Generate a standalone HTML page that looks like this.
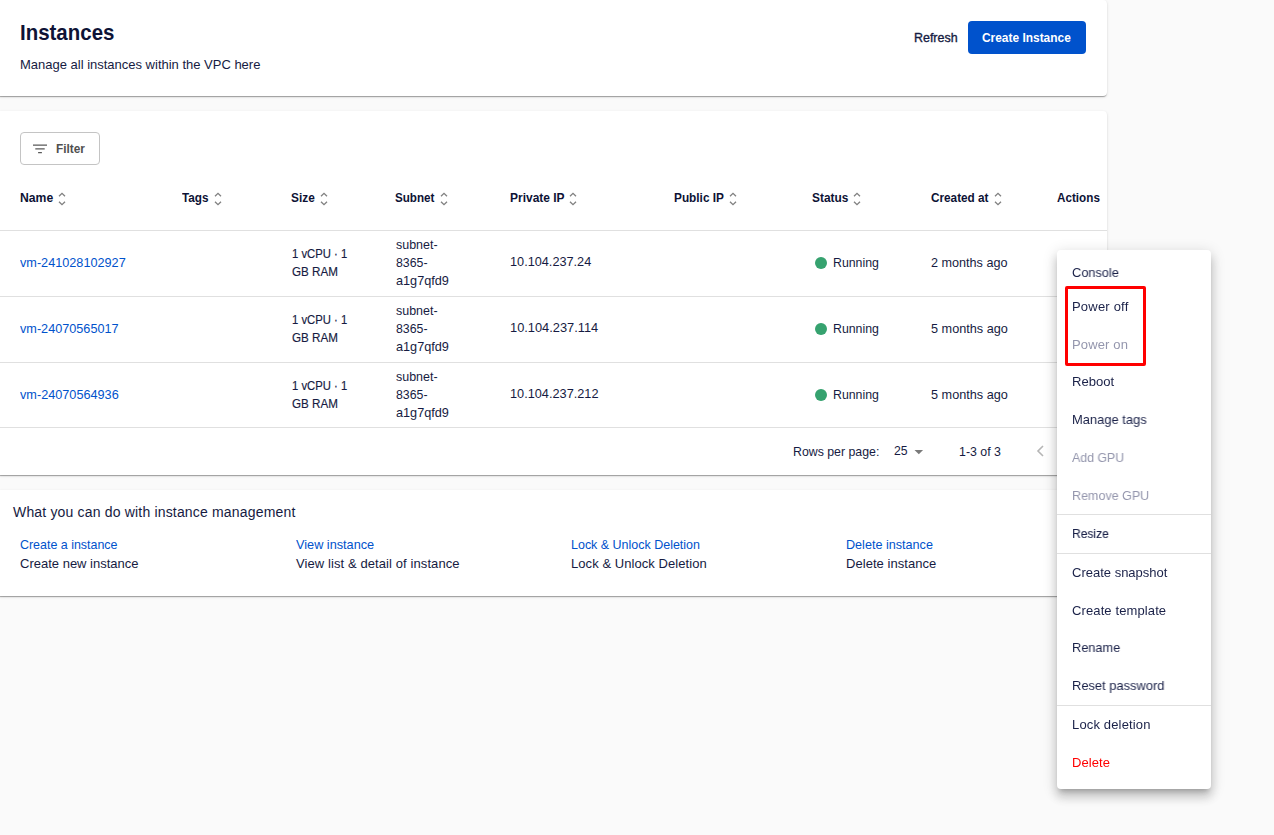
<!DOCTYPE html>
<html><head><meta charset="utf-8"><title>Instances</title>
<style>
*{box-sizing:border-box;margin:0;padding:0}
html,body{width:1274px;height:835px;overflow:hidden}
body{background:#fafafa;font-family:"Liberation Sans",sans-serif;color:#172b4d;position:relative;font-size:13px}
.card{position:absolute;left:-3px;width:1110px;background:#fff;border-radius:4px;box-shadow:0 2px 1px -1px rgba(0,0,0,.2),0 1px 1px 0 rgba(0,0,0,.14),0 1px 3px 0 rgba(0,0,0,.12)}
#hdr{top:0;height:96px}
#tbl{top:111px;height:364px}
#info{top:490px;height:106px}
.t{display:block;position:absolute;white-space:nowrap;color:#161b42;transform-origin:0 50%}
.t13{font-size:13px;line-height:15px}
.t14{font-size:14px;line-height:16px}
.title{font-size:22.5px;font-weight:700;color:#0e1336;line-height:24px}
.b{font-weight:700}
.w{color:#fff}
.gr{color:#505050}
.hd{color:#0d1235}
.med{-webkit-text-stroke:.35px #161b42}
.lnk{color:#0052cc;text-decoration:none}
.mi{will-change:transform;color:#1a2148}
.mi.dis{color:#9496ad}
.mi.red{color:#ff0000}
.btn{position:absolute;left:968px;top:21px;width:118px;height:33px;background:#0052cc;border-radius:4px}
.fbtn{position:absolute;left:20px;top:132px;width:80px;height:33px;border:1px solid #c4c4c4;border-radius:4px;background:#fff}
.fico{position:absolute;left:33px;top:144.3px}
.srt{position:absolute;top:192px}
.hr{position:absolute;left:0;width:1107px;height:1px;background:#e0e0e0}
.dot{position:absolute;left:814.8px;width:11.8px;height:11.8px;border-radius:50%;background:#36a26f}
.menu{position:absolute;left:1057px;top:250px;width:154px;height:539px;background:#fff;border-radius:4px;box-shadow:0 5px 5px -3px rgba(0,0,0,.2),0 8px 10px 1px rgba(0,0,0,.14),0 3px 14px 2px rgba(0,0,0,.12)}
.md{position:absolute;left:1057px;width:154px;height:1px;background:#e0e0e0}
.redbox{position:absolute;left:1065px;top:286px;width:81px;height:80px;border:3px solid #f00;border-radius:2px}
</style></head><body>
<div class="card" id="hdr"></div>
<div class="card" id="tbl"></div>
<div class="card" id="info"></div>
<div class="btn"></div>
<div class="fbtn"></div>
<svg class="fico" width="14" height="10" viewBox="0 0 14 10"><path d="M0 1h14M2.3 4.9h9.4M5.1 8.7h3.8" stroke="#5a5a5a" stroke-width="1.25" fill="none"/></svg>
<div class="hr" style="top:230px"></div>
<div class="hr" style="top:296px"></div>
<div class="hr" style="top:362px"></div>
<div class="hr" style="top:427px"></div>
<div class="dot" style="top:257px"></div>
<div class="dot" style="top:322.8px"></div>
<div class="dot" style="top:389px"></div>
<svg style="position:absolute;left:914px;top:450px" width="10" height="5" viewBox="0 0 10 5"><path d="M0.5 0h8.6l-4.3 4.3z" fill="#7a7a7a"/></svg>
<svg style="position:absolute;left:1036.4px;top:445px" width="8" height="12" viewBox="0 0 8 12"><path d="M7 1L2 6l5 5" stroke="#b5b5b5" stroke-width="1.6" fill="none"/></svg>
<div class="menu"></div>
<div class="md" style="top:514px"></div>
<div class="md" style="top:553px"></div>
<div class="md" style="top:705px"></div>
<div class="redbox"></div>

<h1 id="title" class="t title" style="left:20px;top:21px;transform:scaleX(0.9093)">Instances</h1>
<div id="sub" class="t t13" style="left:20px;top:57px;letter-spacing:-0.006px">Manage all instances within the VPC here</div>
<span id="refresh" class="t t13 med" style="left:914px;top:30px;transform:scaleX(0.9569)">Refresh</span>
<span id="create" class="t t13 b w" style="left:982px;top:30px;transform:scaleX(0.9168)">Create Instance</span>
<span id="filter" class="t t13 b gr" style="left:56px;top:140.8px;transform:scaleX(0.9112)">Filter</span>
<span id="hName" class="t t13 b hd" style="left:20px;top:190px;transform:scaleX(0.9377)">Name</span>
<svg class="srt" style="left:58.3px" width="8" height="14" viewBox="0 0 8 14"><path d="M1 4.3L4 1.3L7 4.3M1 9.7L4 12.7L7 9.7" stroke="#808080" stroke-width="1.3" fill="none"/></svg>
<span id="hTags" class="t t13 b hd" style="left:182px;top:190px;transform:scaleX(0.9020)">Tags</span>
<svg class="srt" style="left:213.5px" width="8" height="14" viewBox="0 0 8 14"><path d="M1 4.3L4 1.3L7 4.3M1 9.7L4 12.7L7 9.7" stroke="#808080" stroke-width="1.3" fill="none"/></svg>
<span id="hSize" class="t t13 b hd" style="left:291px;top:190px;transform:scaleX(0.9125)">Size</span>
<svg class="srt" style="left:319.7px" width="8" height="14" viewBox="0 0 8 14"><path d="M1 4.3L4 1.3L7 4.3M1 9.7L4 12.7L7 9.7" stroke="#808080" stroke-width="1.3" fill="none"/></svg>
<span id="hSubnet" class="t t13 b hd" style="left:395px;top:190px;transform:scaleX(0.8951)">Subnet</span>
<svg class="srt" style="left:440.0px" width="8" height="14" viewBox="0 0 8 14"><path d="M1 4.3L4 1.3L7 4.3M1 9.7L4 12.7L7 9.7" stroke="#808080" stroke-width="1.3" fill="none"/></svg>
<span id="hPriv" class="t t13 b hd" style="left:510px;top:190px;transform:scaleX(0.9208)">Private IP</span>
<svg class="srt" style="left:569.2px" width="8" height="14" viewBox="0 0 8 14"><path d="M1 4.3L4 1.3L7 4.3M1 9.7L4 12.7L7 9.7" stroke="#808080" stroke-width="1.3" fill="none"/></svg>
<span id="hPub" class="t t13 b hd" style="left:674px;top:190px;transform:scaleX(0.9087)">Public IP</span>
<svg class="srt" style="left:729.3px" width="8" height="14" viewBox="0 0 8 14"><path d="M1 4.3L4 1.3L7 4.3M1 9.7L4 12.7L7 9.7" stroke="#808080" stroke-width="1.3" fill="none"/></svg>
<span id="hStatus" class="t t13 b hd" style="left:812px;top:190px;transform:scaleX(0.9145)">Status</span>
<svg class="srt" style="left:853.1px" width="8" height="14" viewBox="0 0 8 14"><path d="M1 4.3L4 1.3L7 4.3M1 9.7L4 12.7L7 9.7" stroke="#808080" stroke-width="1.3" fill="none"/></svg>
<span id="hCreated" class="t t13 b hd" style="left:931px;top:190px;transform:scaleX(0.9042)">Created at</span>
<svg class="srt" style="left:994.2px" width="8" height="14" viewBox="0 0 8 14"><path d="M1 4.3L4 1.3L7 4.3M1 9.7L4 12.7L7 9.7" stroke="#808080" stroke-width="1.3" fill="none"/></svg>
<span id="hActions" class="t t13 b hd" style="left:1057px;top:190px;transform:scaleX(0.8995)">Actions</span>
<a id="nm0" class="t t13 lnk" style="left:20px;top:255px;transform:scaleX(0.9747)">vm-241028102927</a>
<div id="sa0" class="t t13" style="left:292px;top:246.4px;transform:scaleX(0.8685);-webkit-text-stroke:0.18px">1 vCPU · 1</div>
<div id="sb0" class="t t13" style="left:292px;top:264.4px;transform:scaleX(0.8957);-webkit-text-stroke:0.15px">GB RAM</div>
<div id="na0" class="t t13" style="left:396px;top:237px;transform:scaleX(0.9584)">subnet-</div>
<div id="nb0" class="t t13" style="left:396px;top:255.1px;transform:scaleX(0.9471)">8365-</div>
<div id="nc0" class="t t13" style="left:396px;top:273.2px;transform:scaleX(0.9762)">a1g7qfd9</div>
<div id="ip0" class="t t13" style="left:510px;top:254px;transform:scaleX(0.9771)">10.104.237.24</div>
<div id="run0" class="t t13" style="left:833px;top:254.6px;transform:scaleX(0.9484)">Running</div>
<div id="ago0" class="t t13" style="left:931px;top:254.7px;transform:scaleX(0.9704)">2 months ago</div>
<a id="nm1" class="t t13 lnk" style="left:20px;top:321px;transform:scaleX(0.9741)">vm-24070565017</a>
<div id="sa1" class="t t13" style="left:292px;top:312.4px;transform:scaleX(0.8685);-webkit-text-stroke:0.18px">1 vCPU · 1</div>
<div id="sb1" class="t t13" style="left:292px;top:330.4px;transform:scaleX(0.8957);-webkit-text-stroke:0.15px">GB RAM</div>
<div id="na1" class="t t13" style="left:396px;top:303px;transform:scaleX(0.9584)">subnet-</div>
<div id="nb1" class="t t13" style="left:396px;top:321.1px;transform:scaleX(0.9471)">8365-</div>
<div id="nc1" class="t t13" style="left:396px;top:339.2px;transform:scaleX(0.9762)">a1g7qfd9</div>
<div id="ip1" class="t t13" style="left:510px;top:320px;transform:scaleX(0.9870)">10.104.237.114</div>
<div id="run1" class="t t13" style="left:833px;top:320.6px;transform:scaleX(0.9484)">Running</div>
<div id="ago1" class="t t13" style="left:931px;top:320.7px;transform:scaleX(0.9751)">5 months ago</div>
<a id="nm2" class="t t13 lnk" style="left:20px;top:387px;transform:scaleX(0.9754)">vm-24070564936</a>
<div id="sa2" class="t t13" style="left:292px;top:378.4px;transform:scaleX(0.8685);-webkit-text-stroke:0.18px">1 vCPU · 1</div>
<div id="sb2" class="t t13" style="left:292px;top:396.4px;transform:scaleX(0.8957);-webkit-text-stroke:0.15px">GB RAM</div>
<div id="na2" class="t t13" style="left:396px;top:369px;transform:scaleX(0.9584)">subnet-</div>
<div id="nb2" class="t t13" style="left:396px;top:387.1px;transform:scaleX(0.9471)">8365-</div>
<div id="nc2" class="t t13" style="left:396px;top:405.2px;transform:scaleX(0.9762)">a1g7qfd9</div>
<div id="ip2" class="t t13" style="left:510px;top:386px;transform:scaleX(0.9792)">10.104.237.212</div>
<div id="run2" class="t t13" style="left:833px;top:386.6px;transform:scaleX(0.9484)">Running</div>
<div id="ago2" class="t t13" style="left:931px;top:386.7px;transform:scaleX(0.9751)">5 months ago</div>
<div id="rpp" class="t t13" style="left:793px;top:444px;transform:scaleX(0.9482)">Rows per page:</div>
<div id="n25" class="t t13" style="left:894px;top:443px;transform:scaleX(0.9409)">25</div>
<div id="rng" class="t t13" style="left:959px;top:444px;transform:scaleX(0.9516)">1-3 of 3</div>
<div id="ititle" class="t t14" style="left:13px;top:503.7px;letter-spacing:0.175px">What you can do with instance management</div>
<a id="l0" class="t t13 lnk" style="left:20px;top:536.8px;transform:scaleX(0.9567)">Create a instance</a>
<div id="d0" class="t t13" style="left:20px;top:555.5px;letter-spacing:0.002px">Create new instance</div>
<a id="l1" class="t t13 lnk" style="left:296px;top:536.8px;transform:scaleX(0.9772)">View instance</a>
<div id="d1" class="t t13" style="left:296px;top:555.5px;letter-spacing:0.092px">View list &amp; detail of instance</div>
<a id="l2" class="t t13 lnk" style="left:571px;top:536.8px;transform:scaleX(0.9597)">Lock &amp; Unlock Deletion</a>
<div id="d2" class="t t13" style="left:571px;top:555.5px;letter-spacing:0.063px">Lock &amp; Unlock Deletion</div>
<a id="l3" class="t t13 lnk" style="left:846px;top:536.8px;transform:scaleX(0.9699)">Delete instance</a>
<div id="d3" class="t t13" style="left:846px;top:555.5px;letter-spacing:0.042px">Delete instance</div>
<div id="m0" class="t t13 mi" style="left:1072px;top:264.7px;transform:scaleX(0.9831)">Console</div>
<div id="m1" class="t t13 mi" style="left:1072px;top:298.7px;letter-spacing:0.203px">Power off</div>
<div id="m2" class="t t13 mi dis" style="left:1072px;top:336.7px;letter-spacing:0.142px">Power on</div>
<div id="m3" class="t t13 mi" style="left:1072px;top:373.7px;transform:scaleX(1.0060)">Reboot</div>
<div id="m4" class="t t13 mi" style="left:1072px;top:411.7px;transform:scaleX(0.9929)">Manage tags</div>
<div id="m5" class="t t13 mi dis" style="left:1072px;top:449.7px;transform:scaleX(0.9496)">Add GPU</div>
<div id="m6" class="t t13 mi dis" style="left:1072px;top:487.7px;transform:scaleX(0.9627)">Remove GPU</div>
<div id="m7" class="t t13 mi" style="left:1072px;top:525.7px;transform:scaleX(0.9273);-webkit-text-stroke:0.10px">Resize</div>
<div id="m8" class="t t13 mi" style="left:1072px;top:564.7px;transform:scaleX(0.9993)">Create snapshot</div>
<div id="m9" class="t t13 mi" style="left:1072px;top:602.7px;letter-spacing:0.115px">Create template</div>
<div id="m10" class="t t13 mi" style="left:1072px;top:639.7px;transform:scaleX(0.9817)">Rename</div>
<div id="m11" class="t t13 mi" style="left:1072px;top:677.7px;transform:scaleX(0.9915)">Reset password</div>
<div id="m12" class="t t13 mi" style="left:1072px;top:716.7px;letter-spacing:0.156px">Lock deletion</div>
<div id="m13" class="t t13 mi red" style="left:1072px;top:754.7px;letter-spacing:0.086px">Delete</div>
</body></html>
